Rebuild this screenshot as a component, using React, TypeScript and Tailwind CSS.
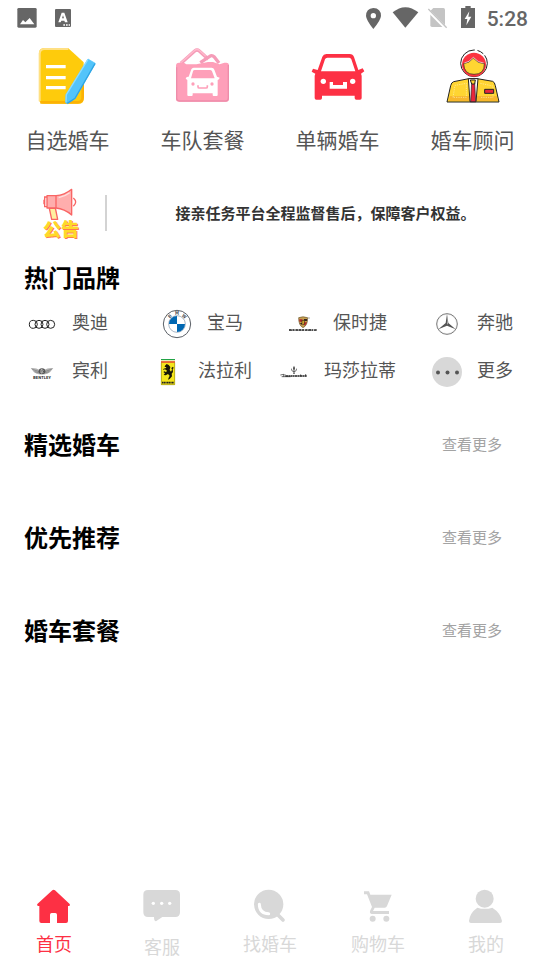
import type { ReactNode } from "react";

type Entry = { label: string; icon: ReactNode };

const NoteIcon = () => (
  <svg viewBox="115 18 180 180" className="h-15 w-15" aria-hidden="true">
    <path d="M133 25H206L252 67V176Q252 191 237 191H133Q118 191 118 176V40Q118 25 133 25Z" fill="#fecb0c" />
    <path d="M120 184V42Q120 27 135 27H206" fill="none" stroke="#ffe083" strokeWidth="6" />
    <path d="M122 187H234Q249 187 249 172V95" fill="none" stroke="#fcb204" strokeWidth="8" />
    <path d="M139 80H198M139 113H198M139 143H198" stroke="#fff" strokeWidth="10" />
    <path d="M265 57L287 70L226 176L203 191L198 188L199 164Z" fill="#53c4fa" stroke="#53c4fa" strokeWidth="2" strokeLinejoin="round" />
    <path d="M265 58L200 164L199 187" fill="none" stroke="#8bdcff" strokeWidth="4" />
    <path d="M286 71L226 175L203 190" fill="none" stroke="#2fa5e4" strokeWidth="4" />
  </svg>
);

const FleetIcon = () => (
  <svg viewBox="520 18 180 180" className="h-15 w-15" aria-hidden="true">
    <path d="M549 70L586 36Q592 31 598 36L622 56L602 70Z" fill="#fff" />
    <path d="M544 70L585 33Q592 27 599 33L626 58M602 68L630 49Q637 44 644 51L658 69" fill="none" stroke="#f59cb8" strokeWidth="10" strokeLinejoin="round" />
    <path d="M542 70L584 32Q592 25 600 32L618 49" fill="none" stroke="#ffb9cc" strokeWidth="4" />
    <path d="M538 68H553L560 73H590L625 66H640L660 73L674 68H680Q688 68 688 77V176Q688 185 679 185H538Q529 185 529 176V77Q529 68 538 68Z" fill="#fe9fb9" />
    <path d="M531 82V175Q531 183 540 183H678Q686 183 686 174V75" fill="none" stroke="#ee8daa" strokeWidth="4" />
    <path d="M582 83H636Q642 83 644 89L652 110L660 113L658 118L654 120V165Q654 168 651 168H642Q639 168 639 165V160H579V165Q579 168 576 168H566Q563 168 563 165V120L558 116L561 111L567 110L575 88Q577 83 582 83ZM585 90Q581 90 580 94L574 115H645L637 94Q635 90 631 90Z" fill="#fff" fillRule="evenodd" />
    <circle cx="580" cy="132" r="5" fill="#fe9fb9" />
    <circle cx="637" cy="132" r="5" fill="#fe9fb9" />
    <path d="M595 136V140Q595 144 599 144H619Q623 144 623 140V136" fill="none" stroke="#fe9fb9" strokeWidth="5" />
  </svg>
);

const CarIcon = () => (
  <svg viewBox="115 18 180 180" className="h-15 w-15" aria-hidden="true">
    <path d="M170 42H240Q250 42 253 51L266 90L279 85L284 94L274 101L276 107V174Q276 179 271 179H260Q255 179 255 174V167H157V174Q157 179 152 179H140Q135 179 135 174V107L137 101L126 95L130 86L144 90L158 50Q161 42 170 42ZM173 53Q168 53 166 58L154 94H257L245 58Q243 53 239 53Z" fill="#fd3044" fillRule="evenodd" />
    <circle cx="161" cy="124" r="8" fill="#fff" />
    <circle cx="249" cy="124" r="8" fill="#fff" />
    <path d="M180 126H190V135H220V126H232V146H180Z" fill="#fff" />
  </svg>
);

const AdvisorIcon = () => (
  <svg viewBox="520 18 180 180" className="h-15 w-15" aria-hidden="true">
    <circle cx="613" cy="70" r="40" fill="#fff" stroke="#222" strokeWidth="3" strokeDasharray="190 8 20 6" />
    <circle cx="613" cy="74" r="36" fill="#fb3340" />
    <path d="M582 71L598 66L611 54L626 67L644 71Q645 103 613 103Q583 103 582 71Z" fill="#ffd532" stroke="#222" strokeWidth="2" />
    <path d="M584 69L598 64L611 52L626 65L642 69" fill="none" stroke="#fff" strokeWidth="2" />
    <path d="M597 116H623L669 124Q675 126 677 137L688 186H532L543 137Q545 127 552 125Z" fill="#ffd532" stroke="#222" strokeWidth="3" />
    <path d="M538 183L541 168H681L685 183Z" fill="#f8b72c" />
    <path d="M550 172L556 136L590 130V172ZM632 130L670 138V172H632" fill="none" stroke="#ffefb0" strokeWidth="2" strokeDasharray="4 3" />
    <path d="M596 116H625L619 185H601Z" fill="#fff" stroke="#222" strokeWidth="3" />
    <path d="M606 128H615L618 185H603Z" fill="#e9253c" stroke="#222" strokeWidth="2" />
    <path d="M602 120H617L615 132H606Z" fill="#ffd532" stroke="#222" strokeWidth="3" />
    <path d="M645 148H672V160H645Z" fill="#e9253c" stroke="#222" strokeWidth="3" />
  </svg>
);

const HornIcon = () => (
  <svg viewBox="108 15 150 168" className="h-14 w-[50px] shrink-0" role="img" aria-label="公告">
    <path d="M148 85L155 118H173L166 84Z" fill="#fff0a0" stroke="#f96564" strokeWidth="4" strokeLinejoin="round" />
    <path d="M141 47H168Q193 46 215 28V105Q193 86 168 84H141Z" fill="#ffaead" stroke="#f96564" strokeWidth="4" strokeLinejoin="round" />
    <path d="M168 47V84M141 51H134V80H141M132 59V73" fill="none" stroke="#f96564" strokeWidth="4" />
    <path d="M176 53Q196 48 209 38" fill="none" stroke="#ffdede" strokeWidth="4" />
    <path d="M220 54Q234 66 220 79" fill="none" stroke="#f96564" strokeWidth="4" />
    <text x="132" y="170" fontSize="54" fontWeight="900" fill="#ff7a50">公告</text>
    <text x="129" y="167" fontSize="54" fontWeight="900" fill="#ffd928">公告</text>
  </svg>
);

const AudiLogo = () => (
  <svg viewBox="81 42 90 90" className="h-[30px] w-[30px]" aria-hidden="true">
    <g fill="none" stroke="#222" strokeWidth="3">
      <circle cx="100" cy="88" r="12" />
      <circle cx="117" cy="88" r="12" />
      <circle cx="135" cy="88" r="12" />
      <circle cx="152" cy="88" r="12" />
    </g>
  </svg>
);

const BmwLogo = () => (
  <svg viewBox="486 42 90 90" className="h-[30px] w-[30px]" aria-hidden="true">
    <circle cx="531" cy="87" r="41" fill="#fff" stroke="#5a5f66" strokeWidth="3" />
    <circle cx="531" cy="87" r="25" fill="#fff" stroke="#7b91a8" strokeWidth="2" />
    <path d="M531 87V63A24 24 0 0 0 507 87ZM531 87V111A24 24 0 0 0 555 87Z" fill="#0067b2" />
    <g fontSize="14" fontWeight="700" fill="#44494f" textAnchor="middle">
      <text x="531" y="60">M</text>
      <text x="531" y="60" transform="rotate(-43 531 87)">B</text>
      <text x="531" y="60" transform="rotate(43 531 87)">W</text>
    </g>
  </svg>
);

const PorscheLogo = () => (
  <svg viewBox="54 42 90 90" className="h-[30px] w-[30px]" aria-hidden="true">
    <path d="M86 68Q99 63 113 68Q113 92 99 98Q86 92 86 68Z" fill="#c6a052" stroke="#695326" strokeWidth="2" />
    <path d="M88 73H97V80H88ZM102 82H111L106 91H102Z" fill="#b3262b" />
    <path d="M102 72H111V78H102ZM89 84H97V91Z" fill="#352520" />
    <path d="M96 76H103V86L99 89L96 86Z" fill="#e4b92e" stroke="#2a2115" strokeWidth="2" />
    <circle cx="117" cy="69" r="2" fill="#888" />
    <path d="M57 105H140" stroke="#111" strokeWidth="5" strokeDasharray="10 1 6 2 8 1" />
    <path d="M63 104H136" stroke="#fff" strokeWidth="1" strokeDasharray="4 6" />
  </svg>
);

const BenzLogo = () => (
  <svg viewBox="486 42 90 90" className="h-[30px] w-[30px]" aria-hidden="true">
    <circle cx="531" cy="87" r="31" fill="#fff" stroke="#777" strokeWidth="3" />
    <circle cx="531" cy="87" r="29" fill="none" stroke="#bbb" strokeWidth="1" />
    <path d="M531 57L535 84L557 103L531 92L505 103L527 84Z" fill="#555" />
    <path d="M531 60L533 86L531 89Z" fill="#ddd" />
  </svg>
);

const BentleyLogo = () => (
  <svg viewBox="81 186 90 90" className="h-[30px] w-[30px]" aria-hidden="true">
    <path d="M92 219Q109 218 119 225H132Q142 218 160 219L150 232Q141 240 126 238Q111 240 102 232Z" fill="#b1b1b1" />
    <path d="M97 223L118 230M104 230L120 234M155 223L133 230M148 230L132 234" stroke="#777" strokeWidth="2" />
    <ellipse cx="126" cy="229" rx="10" ry="9" fill="#555" />
    <path d="M123 224V234H127Q131 232 127 229Q131 226 127 224Z" fill="none" stroke="#eee" strokeWidth="2" />
    <text x="126" y="252" fontSize="12" fontWeight="700" fill="#222" textAnchor="middle">BENTLEY</text>
  </svg>
);

const FerrariLogo = () => (
  <svg viewBox="459 186 90 90" className="h-[30px] w-[30px]" aria-hidden="true">
    <path d="M483 192H525V270H483Z" fill="#f5e51b" />
    <path d="M483 192H525V196H483Z" fill="#22a346" />
    <path d="M483 196H525V199H483Z" fill="#fff" />
    <path d="M483 199H525V203H483Z" fill="#df3333" />
    <path d="M484 203V269H524V203" fill="none" stroke="#99911e" strokeWidth="2" />
    <path d="M500 207L506 210L511 216L509 225L513 230L516 224L514 219L519 215L521 219L518 222L519 231L515 236L516 244L509 252L504 254L506 248L509 242L504 237L497 241L491 240L495 235L490 231L494 229L498 232L501 227L495 223L489 225L491 221L498 219L499 216L494 216L495 212Z" fill="#171608" />
    <path d="M486 263H522" stroke="#222" strokeWidth="5" strokeDasharray="4 1" />
  </svg>
);

const MaseratiLogo = () => (
  <svg viewBox="27 186 90 90" className="h-[30px] w-[30px]" aria-hidden="true">
    <path d="M72 212L75 219L73 228H71L69 219ZM64 219Q62 230 72 231Q82 230 80 219L76 228H68ZM70 232H74V237H70Z" fill="#444" />
    <path d="M31 240L42 238L40 245M45 238L46 245" fill="none" stroke="#222" strokeWidth="2" />
    <path d="M47 243H111" stroke="#222" strokeWidth="4" strokeDasharray="7 1 5 1" />
    <path d="M92 238V244M107 237V244M35 245H62" stroke="#222" strokeWidth="2" />
  </svg>
);

const MoreIcon = () => (
  <svg viewBox="0 0 30 30" className="h-[30px] w-[30px]" aria-hidden="true">
    <circle cx="15" cy="15" r="15" fill="#d8d8d8" />
    <g fill="#555">
      <circle cx="6" cy="15.5" r="2" />
      <circle cx="15.5" cy="15.5" r="2" />
      <circle cx="25" cy="15.5" r="2" />
    </g>
  </svg>
);

const HomeIcon = () => (
  <svg viewBox="108 24 108 108" className="h-9 w-9" aria-hidden="true">
    <path d="M157 31Q161 28 165 31L209 72Q212 78 204 78V123Q204 129 198 129H171V104Q171 99 166 99H155Q150 99 150 104V129H124Q118 129 118 123V78Q109 78 112 72Z" fill="currentColor" />
  </svg>
);

const ChatIcon = () => (
  <svg viewBox="429 24 114 117" className="h-[39px] w-[38px]" aria-hidden="true">
    <path d="M444 30H526Q540 30 540 44V97Q540 111 526 111H487L468 124Q462 124 462 111H444Q430 111 430 97V44Q430 30 444 30Z" fill="currentColor" />
    <circle cx="460" cy="70" r="5" fill="#fff" />
    <circle cx="485" cy="70" r="5" fill="#fff" />
    <circle cx="509" cy="70" r="5" fill="#fff" />
  </svg>
);

const FindIcon = () => (
  <svg viewBox="756 24 108 108" className="h-9 w-9" aria-hidden="true">
    <circle cx="806" cy="73" r="44" fill="currentColor" />
    <path d="M834 105L849 120" stroke="currentColor" strokeWidth="11" strokeLinecap="round" />
    <path d="M778 73Q779 101 806 101" fill="none" stroke="#fff" strokeWidth="9" strokeLinecap="round" />
  </svg>
);

const CartIcon = () => (
  <svg viewBox="270 24 108 108" className="h-9 w-9" aria-hidden="true">
    <path d="M282 34H297L301 44H365L351 78Q349 83 344 83H314L309 93H357V102H305Q297 101 301 91L306 81L291 43H282Z" fill="currentColor" />
    <circle cx="308" cy="116" r="9" fill="currentColor" />
    <circle cx="349" cy="116" r="9" fill="currentColor" />
  </svg>
);

const UserIcon = () => (
  <svg viewBox="594 24 108 108" className="h-9 w-9" aria-hidden="true">
    <circle cx="644" cy="56" r="27" fill="currentColor" />
    <path d="M597 123Q599 99 622 83Q644 90 667 83Q692 99 696 123Q696 129 690 129H603Q597 129 597 123Z" fill="currentColor" />
  </svg>
);

const services: Entry[] = [
  { label: "自选婚车", icon: <NoteIcon /> },
  { label: "车队套餐", icon: <FleetIcon /> },
  { label: "单辆婚车", icon: <CarIcon /> },
  { label: "婚车顾问", icon: <AdvisorIcon /> },
];

const brands: Entry[] = [
  { label: "奥迪", icon: <AudiLogo /> },
  { label: "宝马", icon: <BmwLogo /> },
  { label: "保时捷", icon: <PorscheLogo /> },
  { label: "奔驰", icon: <BenzLogo /> },
  { label: "宾利", icon: <BentleyLogo /> },
  { label: "法拉利", icon: <FerrariLogo /> },
  { label: "玛莎拉蒂", icon: <MaseratiLogo /> },
  { label: "更多", icon: <MoreIcon /> },
];

const sections = ["精选婚车", "优先推荐", "婚车套餐"];

const tabs: Entry[] = [
  { label: "首页", icon: <HomeIcon /> },
  { label: "客服", icon: <ChatIcon /> },
  { label: "找婚车", icon: <FindIcon /> },
  { label: "购物车", icon: <CartIcon /> },
  { label: "我的", icon: <UserIcon /> },
];

function StatusBar() {
  return (
    <div className="flex h-9 items-center justify-between pr-3 pl-4 text-[#666]">
      <svg viewBox="48 0 168 108" className="h-9 w-14" aria-hidden="true">
        <path d="M56 24H106Q110 24 110 28V79Q110 83 106 83H56Q52 83 52 79V28Q52 24 56 24Z" fill="currentColor" />
        <path d="M60 73L69 60L76 67L89 54L103 73Z" fill="#fff" />
        <path d="M168 27H210Q213 27 213 30V78Q213 81 210 81H168Q165 81 165 78V30Q165 27 168 27Z" fill="currentColor" />
        <path d="M185 38H193L203 67H195L193 62H184L182 67H175ZM189 46L186 55H192Z" fill="#fff" fillRule="evenodd" />
        <path d="M190 75H210" stroke="#fff" strokeWidth="4" strokeDasharray="5 3" />
      </svg>
      <div className="flex items-center gap-[11px]">
        <svg viewBox="285 0 333 108" className="h-9 w-[111px]" aria-hidden="true">
          <path d="M310 24Q333 25 333 48Q332 61 310 87Q289 61 288 48Q288 26 310 24ZM310 39A8 8 0 1 0 310 55A8 8 0 1 0 310 39Z" fill="currentColor" fillRule="evenodd" />
          <path d="M368 37Q406 6 445 37L406 83Z" fill="currentColor" />
          <path d="M490 24H520Q525 24 525 29V76Q525 81 520 81H486Q481 81 481 76V33Z" fill="#c4c4c4" />
          <path d="M472 29L528 85" stroke="#fff" strokeWidth="9" />
          <path d="M475 27L530 83" stroke="#c4c4c4" strokeWidth="4" />
          <path d="M586 18H602V24H615V84H573V24H586Z" fill="currentColor" />
          <path d="M598 34L584 57H592L589 76L604 50H595Z" fill="#fff" />
        </svg>
        <time className="pt-0.5 font-[Roboto,sans-serif] text-[21px] leading-9 font-medium">5:28</time>
      </div>
    </div>
  );
}

export default function App() {
  return (
    <div className="flex min-h-screen flex-col bg-white font-['Noto_Sans_CJK_SC',sans-serif] text-[#555]">
      <StatusBar />

      <main>
        <div className="grid grid-cols-4 pt-[10px]">
          {services.map((item) => (
            <button key={item.label} type="button" className="flex flex-col items-center gap-[19px]">
              {item.icon}
              <span className="text-[21px] leading-7">{item.label}</span>
            </button>
          ))}
        </div>

        <div className="mt-8 flex items-center pl-9">
          <HornIcon />
          <div className="ml-[19px] h-9 w-0.5 shrink-0 bg-[#d3d3d3]" />
          <p className="flex-1 pl-1 text-center text-[15px] leading-6 font-bold text-[#333]">
            接亲任务平台全程监督售后，保障客户权益。
          </p>
        </div>

        <h2 className="mt-[18px] pl-6 text-2xl leading-9 font-bold text-black">热门品牌</h2>
        <div className="mt-[5px] grid grid-cols-4">
          {brands.map((brand) => (
            <button key={brand.label} type="button" className="flex h-12 items-center justify-center gap-[15px]">
              {brand.icon}
              <span className="pb-1.5 text-lg leading-6">{brand.label}</span>
            </button>
          ))}
        </div>

        <div className="mt-[30px] flex flex-col gap-[57px]">
          {sections.map((title) => (
            <section key={title} className="flex items-center justify-between pr-[38px] pl-6">
              <h2 className="text-2xl leading-9 font-bold text-black">{title}</h2>
              <a href="#" className="text-[15px] leading-6 text-[#a3a3a3]">查看更多</a>
            </section>
          ))}
        </div>
      </main>

      <nav className="mt-auto grid grid-cols-5 items-start pb-0.5">
        {tabs.map((tab, i) => (
          <button
            key={tab.label}
            type="button"
            aria-current={i === 0 ? "page" : undefined}
            className={`flex flex-col items-center gap-[7px] ${i === 0 ? "text-[#fd3044]" : "text-[#d8d8d8]"}`}
          >
            {tab.icon}
            <span className="text-lg leading-6">{tab.label}</span>
          </button>
        ))}
      </nav>
    </div>
  );
}
